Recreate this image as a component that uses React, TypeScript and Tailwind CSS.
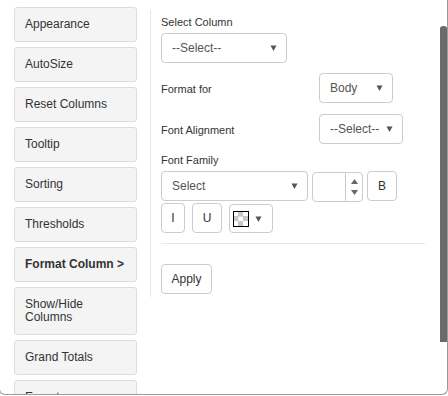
import React from "react";

const Arrow = ({ className = "" }: { className?: string }) => (
  <svg width="7" height="6" viewBox="0 0 7 6" className={className}>
    <path d="M0.5 0.5 L6.5 0.5 L3.5 6 Z" fill="#555" />
  </svg>
);

const SelectBox = ({ text, w, textCls = "" }: { text: string; w: string; textCls?: string }) => (
  <div className={`${w} h-[30px] border border-[#ccc] rounded-[4px] bg-white flex items-center justify-between pl-[10px] pr-[9px] shrink-0`}>
    <span className={`text-[12px] text-[#555] ${textCls}`}>{text}</span>
    <Arrow />
  </div>
);

const navItems: { label: React.ReactNode; bold?: boolean; tall?: boolean }[] = [
  { label: "Appearance" },
  { label: "AutoSize" },
  { label: "Reset Columns" },
  { label: "Tooltip" },
  { label: "Sorting" },
  { label: "Thresholds" },
  { label: "Format Column >", bold: true },
  { label: (<>Show/Hide<br />Columns</>), tall: true },
  { label: "Grand Totals" },
  { label: "Export" },
];

export default function App() {
  return (
    <div className="w-[448px] h-[396px] overflow-hidden bg-white relative" style={{ fontFamily: '"Liberation Sans", Arial, sans-serif' }}>
      <div className="w-[449px] h-[395px] -ml-px border-l border-r border-b border-[#9a9a9a] rounded-b-[6px] overflow-hidden flex">
        {/* Left nav */}
        <div className="w-[137px] shrink-0 pl-[14px] pt-[7px] flex flex-col gap-[5px]">
          {navItems.map((it, i) => (
            <div
              key={i}
              className={`w-[123px] shrink-0 border border-[#dcdcdc] rounded-[3px] bg-[#f4f4f4] pl-[10px] text-[12px] leading-[13px] text-[#333] ${
                it.tall ? "py-[10px]" : "h-[35px] flex items-center"
              } ${it.bold ? "font-bold" : ""}`}
            >
              <span>{it.label}</span>
            </div>
          ))}
        </div>

        {/* Divider */}
        <div className="ml-[13px] mt-[10px] w-px h-[287px] bg-[#e6e6e6] shrink-0" />

        {/* Right content */}
        <div className="ml-[10px] pt-[16px] flex flex-col text-[#333]">
          <div className="text-[11px] leading-[13px]">Select Column</div>
          <div className="mt-[4px]">
            <SelectBox text="--Select--" w="w-[126px]" />
          </div>

          <div className="mt-[10px] flex items-center">
            <div className="w-[158px] text-[11px] leading-[13px] pt-[2px]">Format for</div>
            <SelectBox text="Body" w="w-[74px]" />
          </div>

          <div className="mt-[11px] flex items-center">
            <div className="w-[158px] text-[11px] leading-[13px] pt-[2px]">Font Alignment</div>
            <SelectBox text="--Select--" w="w-[84px]" />
          </div>

          <div className="mt-[10px] text-[11px] leading-[13px]">Font Family</div>
          <div className="mt-[4px] flex items-start gap-[4px]">
            <SelectBox text="Select" w="w-[147px]" />
            <div className="mt-[1px] w-[51px] h-[30px] border border-[#ccc] rounded-[4px] bg-white flex justify-end">
              <div className="w-[17px] h-full border-l border-[#ccc] flex flex-col items-center justify-center gap-[6px]">
                <svg width="7" height="5" viewBox="0 0 7 5"><path d="M0 5 L7 5 L3.5 0 Z" fill="#666" /></svg>
                <svg width="7" height="5" viewBox="0 0 7 5"><path d="M0 0 L7 0 L3.5 5 Z" fill="#666" /></svg>
              </div>
            </div>
            <div className="w-[30px] h-[30px] border border-[#ccc] rounded-[4px] bg-white flex items-center justify-center text-[12px] text-[#333]">B</div>
          </div>

          <div className="mt-[1px] flex items-start gap-[7px]">
            <div className="w-[24px] h-[30px] border border-[#ccc] rounded-[4px] bg-white flex items-center justify-center text-[12px] text-[#333]">I</div>
            <div className="w-[30px] h-[30px] border border-[#ccc] rounded-[4px] bg-white flex items-center justify-center text-[12px] text-[#333]">U</div>
            <div className="mt-[1px] w-[44px] h-[29px] border border-[#ccc] rounded-[4px] bg-white flex items-center pl-[3px] gap-[6px]">
              <svg width="16" height="16" viewBox="0 0 16 16">
                <rect x="0" y="0" width="16" height="16" fill="#fff" />
                <rect x="5" y="0.5" width="5" height="5" fill="#c8c8c8" />
                <rect x="0.5" y="5" width="5" height="5" fill="#c8c8c8" />
                <rect x="10" y="5" width="5.5" height="5" fill="#c8c8c8" />
                <rect x="5" y="10" width="5" height="5.5" fill="#c8c8c8" />
                <rect x="0.5" y="0.5" width="15" height="15" fill="none" stroke="#000" strokeWidth="1" />
              </svg>
              <Arrow />
            </div>
          </div>

          <div className="mt-[10px] w-[264px] h-px bg-[#e8e8e8]" />

          <div className="mt-[20px] w-[51px] h-[30px] border border-[#ccc] rounded-[4px] bg-white flex items-center justify-center text-[12px] text-[#333]">Apply</div>
        </div>
      </div>

      {/* Scrollbar thumb */}
      <div className="absolute left-[440px] top-[26px] w-[7px] h-[316px] bg-[#6b6b6b] rounded-t-[3px]" />
    </div>
  );
}
